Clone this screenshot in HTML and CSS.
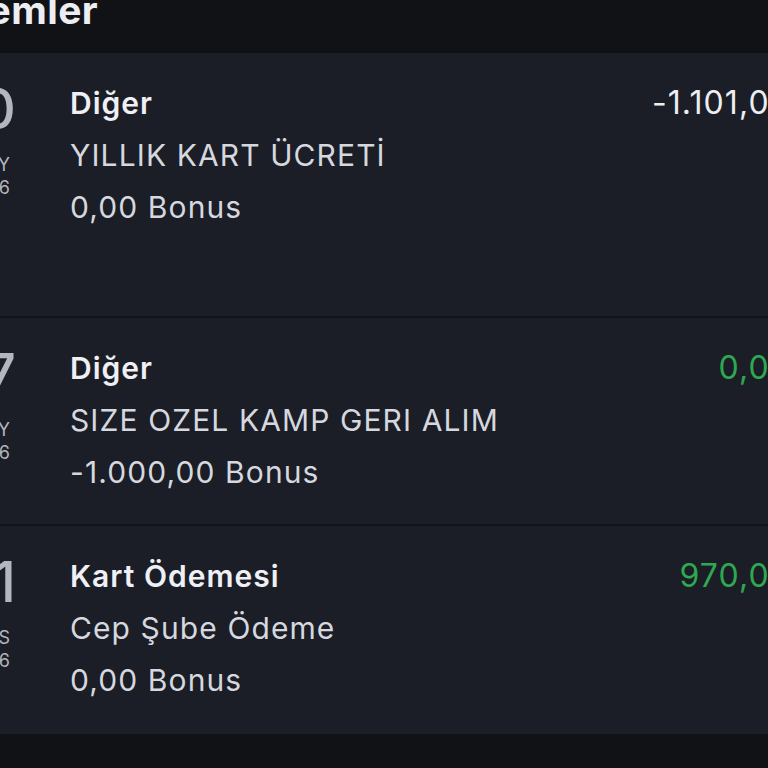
FILE: index.html
```html
<!DOCTYPE html>
<html lang="tr">
<head>
  <meta charset="UTF-8" />
  <meta name="viewport" content="width=device-width, initial-scale=1" />
  <title>İşlemler</title>
  <link rel="stylesheet" href="styles.css">
</head>
<body>
  <header class="top-bar">
    <h2 class="top-title">İşlemler</h2>
  </header>

  <main class="tx-list">
    <div class="tx-row tx-row-tall">
      <div class="tx-date">
        <span class="tx-day">30</span>
        <span class="tx-month">MAY</span>
        <span class="tx-year">2026</span>
      </div>
      <div class="tx-info">
        <div class="tx-type">Diğer</div>
        <div class="tx-desc">YILLIK KART ÜCRETİ</div>
        <div class="tx-desc">0,00 Bonus</div>
      </div>
      <div class="tx-amount">-1.101,00</div>
    </div>

    <div class="tx-row">
      <div class="tx-date">
        <span class="tx-day">27</span>
        <span class="tx-month">MAY</span>
        <span class="tx-year">2026</span>
      </div>
      <div class="tx-info">
        <div class="tx-type">Diğer</div>
        <div class="tx-desc">SIZE OZEL KAMP GERI ALIM</div>
        <div class="tx-desc">-1.000,00 Bonus</div>
      </div>
      <div class="tx-amount positive">0,00</div>
    </div>

    <div class="tx-row">
      <div class="tx-date">
        <span class="tx-day">11</span>
        <span class="tx-month">NİS</span>
        <span class="tx-year">2026</span>
      </div>
      <div class="tx-info">
        <div class="tx-type">Kart Ödemesi</div>
        <div class="tx-desc">Cep Şube Ödeme</div>
        <div class="tx-desc">0,00 Bonus</div>
      </div>
      <div class="tx-amount positive">970,00</div>
    </div>
  </main>

  <div class="bottom-band"></div>
</body>
</html>
```

FILE: styles.css
```css
/* Dark statement list */
html, body {
  margin: 0;
  height: 100%;
  overflow: hidden;
}

body {
  background: #111216;
  font-family: Inter, 'Noto Sans', sans-serif;
  color: #eceef3;
}

.top-bar {
  height: 63px;
  margin-top: -10px;
  margin-left: -57px;
  background: #111216;
}

.top-title {
  margin: 0;
  font-size: 39px;
  font-weight: 700;
  line-height: 40px;
  letter-spacing: 0.4px;
}

.tx-list {
  margin: 0 -23px 0 -60px;
  background: #1b1e26;
}

.tx-row {
  display: grid;
  grid-template-columns: 74px 1fr auto;
  column-gap: 56px;
  height: 208px;
  padding-top: 24px;
  box-sizing: border-box;
  border-bottom: 2px solid #121419;
}

.tx-row-tall {
  height: 265px;
}

.tx-row:last-child {
  border-bottom: none;
}

/* Date column (cut off at the left edge) */
.tx-date {
  display: flex;
  flex-direction: column;
  align-items: flex-end;
  color: #b3b5bf;
}

.tx-day {
  font-size: 56px;
  font-weight: 500;
  line-height: 64px;
  margin-right: -2px;
  margin-bottom: 12px;
}

.tx-month,
.tx-year {
  font-size: 18px;
  line-height: 23px;
  margin-right: 4px;
}

.tx-info {
  display: flex;
  flex-direction: column;
}

.tx-type {
  font-size: 30px;
  font-weight: 600;
  line-height: 52px;
  letter-spacing: 1px;
  color: #eef0f5;
}

.tx-desc {
  font-size: 30px;
  line-height: 52px;
  letter-spacing: 1.1px;
  color: #d6d8df;
}

.tx-amount {
  font-size: 32px;
  line-height: 52px;
  letter-spacing: 1.1px;
  color: #eceef3;
  text-align: right;
}

.tx-amount.positive {
  color: #2ea851;
}

.bottom-band {
  height: 40px;
  background: #111216;
}
```
